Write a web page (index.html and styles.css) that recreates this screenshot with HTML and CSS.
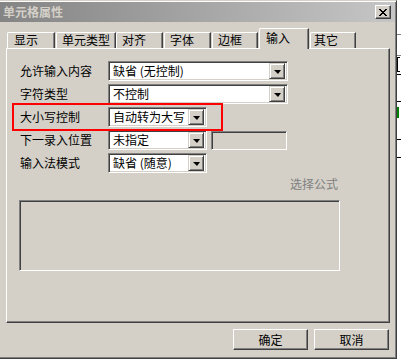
FILE: index.html
```html
<!DOCTYPE html>
<html lang="zh-CN">
<head>
<meta charset="utf-8">
<title>单元格属性</title>
<link rel="stylesheet" href="styles.css">
</head>
<body>
<div class="screen">
  <div class="dialog">
    <div class="titlebar">
      <span class="title">单元格属性</span>
      <div class="close">
        <svg width="8" height="7" viewBox="0 0 8 7"><path d="M0 0h2v1h1v1h2V1h1V0h2v1H7v1H6v1H5v1h1v1h1v1h1v1H6V6H5V5H3v1H2v1H0V6h1V5h1V4h1V3H2V2H1V1H0z" fill="#000"/></svg>
      </div>
    </div>
    <div class="tabs">
      <div class="tab t1">显示</div>
      <div class="tab t2">单元类型</div>
      <div class="tab t3">对齐</div>
      <div class="tab t4">字体</div>
      <div class="tab t5">边框</div>
      <div class="tab active t6">输入</div>
      <div class="tab t7">其它</div>
    </div>
    <div class="panel">
      <div class="row">
        <span class="label">允许输入内容</span>
        <div class="combo wide"><span class="value">缺省 (无控制)</span><span class="drop"><i class="arrow"></i></span></div>
      </div>
      <div class="row">
        <span class="label">字符类型</span>
        <div class="combo wide"><span class="value">不控制</span><span class="drop"><i class="arrow"></i></span></div>
      </div>
      <div class="row">
        <span class="label">大小写控制</span>
        <div class="combo narrow"><span class="value">自动转为大写</span><span class="drop"><i class="arrow"></i></span></div>
      </div>
      <div class="row">
        <span class="label">下一录入位置</span>
        <div class="combo narrow"><span class="value">未指定</span><span class="drop"><i class="arrow"></i></span></div>
        <div class="field"></div>
      </div>
      <div class="row">
        <span class="label">输入法模式</span>
        <div class="combo narrow"><span class="value">缺省 (随意)</span><span class="drop"><i class="arrow"></i></span></div>
      </div>
      <div class="formula">选择公式</div>
      <div class="box"></div>
      <div class="highlight"></div>
    </div>
    <div class="buttons">
      <div class="btn">确定</div>
      <div class="btn">取消</div>
    </div>
  </div>
  <div class="strip">
    <div class="s-line gray m34"></div>
    <div class="s-line gray m20"></div>
    <div class="s-mark m1"></div>
    <div class="s-line black m2"></div>
    <div class="s-line black m26"></div>
    <div class="s-green"></div>
    <div class="s-line black m21"></div>
    <div class="s-line black m17"></div>
  </div>
</div>
</body>
</html>
```
FILE: styles.css
```css
* { box-sizing: border-box; }
html, body { margin: 0; padding: 0; }
body {
  background: #fff;
  font-family: "Noto Sans CJK SC", "Noto Sans", sans-serif;
  font-size: 12px;
  line-height: 12px;
  color: #000;
}
.screen { display: flex; width: 401px; height: 359px; overflow: hidden; }

.dialog {
  flex: none;
  width: 397px;
  height: 359px;
  background: #d4d0c8;
  border-top: 1px solid #d4d0c8;
  border-right: 1px solid #404040;
  border-bottom: 1px solid #404040;
  box-shadow: inset 0 1px 0 #fff, inset -1px -1px 0 #808080;
  padding-top: 1px;
  display: flex;
  flex-direction: column;
}

.titlebar {
  height: 20px;
  margin-right: 1px;
  background: linear-gradient(90deg, #848484, #c6c6c6);
  display: flex;
  align-items: center;
  padding-left: 3px;
}
.title { color: #d4d0c8; font-weight: bold; font-size: 12px; line-height: 12px; }
.close {
  margin-left: auto;
  margin-right: 4px;
  width: 16px;
  height: 14px;
  background: #d4d0c8;
  border: 1px solid;
  border-color: #fff #404040 #404040 #fff;
  box-shadow: inset -1px -1px 0 #808080;
  display: flex;
  align-items: center;
  justify-content: center;
}
.close svg { display: block; margin-left: -1px; }

.tabs {
  display: flex;
  align-items: flex-end;
  height: 21px;
  margin-top: 6px;
  margin-bottom: -1px;
  padding-left: 7px;
}
.tab {
  height: 16px;
  margin-bottom: 1px;
  border-top: 1px solid #fff;
  border-left: 1px solid #fff;
  border-right: 1px solid #404040;
  border-top-left-radius: 2px;
  box-shadow: inset -1px 0 0 #808080;
  padding-top: 1px;
  white-space: nowrap;
}
.tab.active {
  position: relative;
  z-index: 1;
  height: 21px;
  margin-bottom: 0;
  background: #d4d0c8;
  padding-top: 3px;
}
.t1 { width: 48px; padding-left: 6px; }
.t2 { width: 60px; margin-left: 1px; padding-left: 5px; }
.t3 { width: 47px; padding-left: 5px; }
.t4 { width: 47px; margin-left: 1px; padding-left: 5px; }
.t5 { width: 46px; margin-left: 1px; padding-left: 5px; }
.t6 { width: 50px; margin-left: 1px; padding-left: 6px; }
.t7 { width: 46px; margin-left: 1px; padding-left: 3px; }

.panel {
  position: relative;
  margin-left: 6px;
  width: 384px;
  height: 275px;
  border-top: 1px solid #fff;
  border-left: 1px solid #fff;
  border-right: 1px solid #404040;
  border-bottom: 1px solid #404040;
  box-shadow: inset -1px -1px 0 #808080;
  padding-top: 12px;
}

.row {
  display: flex;
  align-items: center;
  height: 20px;
  margin-top: 3px;
  padding-left: 13px;
}
.row:first-child { margin-top: 0; }
.label { width: 88px; flex: none; }

.combo {
  display: flex;
  align-items: center;
  height: 20px;
  padding: 2px;
  border: 1px solid;
  border-color: #808080 #fff #fff #808080;
  box-shadow: inset 1px 1px 0 #404040, inset -1px -1px 0 #d4d0c8;
  background: #fff;
  flex: none;
}
.combo.wide { width: 180px; }
.combo.narrow { width: 99px; }
.value { flex: 1; padding-left: 2px; white-space: nowrap; }
.drop {
  width: 16px;
  height: 16px;
  flex: none;
  background: #d4d0c8;
  border: 1px solid;
  border-color: #d4d0c8 #404040 #404040 #d4d0c8;
  box-shadow: inset 1px 1px 0 #fff, inset -1px -1px 0 #808080;
  display: flex;
  align-items: center;
  justify-content: center;
}
.arrow {
  display: block;
  width: 0;
  height: 0;
  border-left: 4px solid transparent;
  border-right: 3px solid transparent;
  border-top: 4px solid #000;
  margin-top: 1px;
}

.field {
  width: 76px;
  height: 19px;
  margin-left: 4px;
  border: 1px solid;
  border-color: #808080 #fff #fff #808080;
  box-shadow: inset 1px 1px 0 #404040, inset -1px -1px 0 #d4d0c8;
  background: #d4d0c8;
}

.formula {
  margin-top: 5px;
  text-align: right;
  padding-right: 51px;
  color: #808080;
}

.box {
  margin-top: 10px;
  margin-left: 12px;
  width: 321px;
  height: 71px;
  border: 1px solid;
  border-color: #808080 #fff #fff #808080;
  box-shadow: inset 1px 1px 0 #404040, inset -1px -1px 0 #d4d0c8;
}

.highlight {
  position: absolute;
  left: 5px;
  top: 54px;
  width: 211px;
  height: 28px;
  border: 2px solid #f00;
}

.buttons {
  display: flex;
  justify-content: flex-end;
  gap: 6px;
  margin-top: 6px;
  padding-right: 7px;
}
.btn {
  width: 75px;
  height: 21px;
  border: 1px solid;
  border-color: #fff #404040 #404040 #fff;
  box-shadow: inset -1px -1px 0 #808080;
  display: flex;
  align-items: center;
  justify-content: center;
}

.strip {
  flex: none;
  width: 4px;
  background: #fff;
  display: flex;
  flex-direction: column;
}
.s-line { height: 1px; width: 4px; }
.s-line.gray { background: #808080; }
.s-line.black { background: #000; }
.m34 { margin-top: 34px; }
.m20 { margin-top: 20px; }
.m1 { margin-top: 1px; }
.m2 { margin-top: 2px; }
.m26 { margin-top: 26px; }
.m21 { margin-top: 21px; }
.m17 { margin-top: 17px; }
.s-mark { width: 3px; height: 15px; border-left: 1px solid #000; border-top: 1px solid #000; border-bottom: 1px solid #000; }
.s-green { margin-top: 5px; width: 2px; height: 11px; background: #008000; }
```
